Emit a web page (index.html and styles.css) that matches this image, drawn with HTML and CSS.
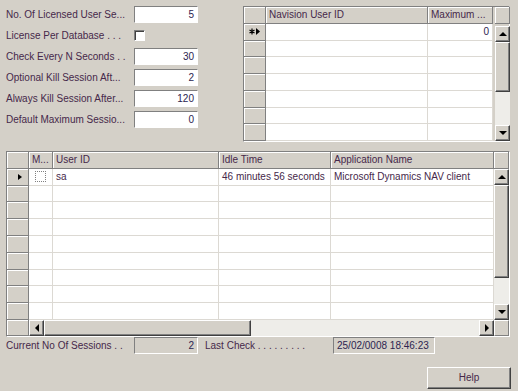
FILE: index.html
```html
<!DOCTYPE html>
<html>
<head>
    <title>Session Monitor</title>
    <link rel="stylesheet" href="styles.css">
</head>
<body>
<div class="window">

  <div class="top">
    <!-- setup fields -->
    <div class="form">
      <div class="row"><span class="lbl">No. Of Licensed User Se...</span><span class="field">5</span></div>
      <div class="row"><span class="lbl">License Per Database . . .</span><span class="check"></span></div>
      <div class="row"><span class="lbl">Check Every N Seconds . .</span><span class="field">30</span></div>
      <div class="row"><span class="lbl">Optional Kill Session Aft...</span><span class="field">2</span></div>
      <div class="row"><span class="lbl">Always Kill Session After...</span><span class="field">120</span></div>
      <div class="row"><span class="lbl">Default Maximum Sessio...</span><span class="field">0</span></div>
    </div>

    <!-- user limits grid -->
    <div class="grid grid-top">
      <div class="gap"></div>
      <div class="hc sbh"></div>
      <div class="vscroll">
        <div class="sbtn"><i class="up"></i></div>
        <div class="thumb" style="height:50px"></div>
        <div class="track"></div>
        <div class="sbtn"><i class="down"></i></div>
      </div>

      <div class="hc"></div><div class="hc">Navision User ID</div><div class="hc">Maximum ...</div>
      <div class="rh"><svg width="12" height="7" viewBox="0 0 12 7"><path d="M3 0.5v6M0.5 2l5 3M0.5 5l5-3" stroke="#000" stroke-width="1.2"/><path d="M7 0l4 3.5-4 3.5z" fill="#000"/></svg></div><div class="c"></div><div class="c num">0</div>
      <div class="rh"></div><div class="c"></div><div class="c"></div>
      <div class="rh"></div><div class="c"></div><div class="c"></div>
      <div class="rh"></div><div class="c"></div><div class="c"></div>
      <div class="rh"></div><div class="c"></div><div class="c"></div>
      <div class="rh"></div><div class="c"></div><div class="c"></div>
      <div class="rh"></div><div class="c"></div><div class="c"></div>
    </div>
  </div>

  <!-- sessions grid -->
  <div class="grid grid-bottom">
    <div class="hc sbh"></div>
    <div class="vscroll">
      <div class="sbtn"><i class="up"></i></div>
      <div class="thumb" style="height:93px"></div>
      <div class="track"></div>
      <div class="sbtn"><i class="down"></i></div>
    </div>
    <div class="rh hfoot"></div>
    <div class="hscroll">
      <div class="sbtn"><i class="left"></i></div>
      <div class="thumb" style="width:207px"></div>
      <div class="track"></div>
      <div class="sbtn"><i class="right"></i></div>
    </div>
    <div class="corner"></div>

    <div class="hc"></div><div class="hc">M...</div><div class="hc">User ID</div><div class="hc">Idle Time</div><div class="hc">Application Name</div>
    <div class="rh"><i class="cur"></i></div><div class="c"><span class="cb"></span></div><div class="c">sa</div><div class="c">46 minutes 56 seconds</div><div class="c">Microsoft Dynamics NAV client</div>
    <div class="rh"></div><div class="c"></div><div class="c"></div><div class="c"></div><div class="c"></div>
    <div class="rh"></div><div class="c"></div><div class="c"></div><div class="c"></div><div class="c"></div>
    <div class="rh"></div><div class="c"></div><div class="c"></div><div class="c"></div><div class="c"></div>
    <div class="rh"></div><div class="c"></div><div class="c"></div><div class="c"></div><div class="c"></div>
    <div class="rh"></div><div class="c"></div><div class="c"></div><div class="c"></div><div class="c"></div>
    <div class="rh"></div><div class="c"></div><div class="c"></div><div class="c"></div><div class="c"></div>
    <div class="rh"></div><div class="c"></div><div class="c"></div><div class="c"></div><div class="c"></div>
    <div class="rh"></div><div class="c"></div><div class="c"></div><div class="c"></div><div class="c"></div>
  </div>

  <div class="status">
    <span class="lbl">Current No Of Sessions . .</span><span class="field ro">2</span>
    <span class="lbl2">Last Check . . . . . . . . .</span><span class="field ro date">25/02/0008 18:46:23</span>
  </div>

  <div class="buttons">
    <button class="btn">Help</button>
  </div>
</div>
</body>
</html>
```

FILE: styles.css
```css
body {
  margin: 0;
  background: #d4d0c8;
  font-family: "Liberation Sans", Arial, sans-serif;
  font-size: 10px;
  color: #46284a;
}
.window {
  width: 518px;
  height: 391px;
  padding: 6px 0 0 6px;
  box-sizing: border-box;
  overflow: hidden;
}

/* top part */
.top {
  display: flex;
  height: 136px;
}
.form {
  width: 237px;
  display: flex;
  flex-direction: column;
  gap: 4px;
}
.row {
  display: flex;
  align-items: center;
  height: 17px;
}
.lbl {
  width: 128px;
  white-space: nowrap;
}
.field {
  width: 64px;
  height: 17px;
  box-sizing: border-box;
  background: #fff;
  border: 1px solid;
  border-color: #808080 #fff #fff #808080;
  text-align: right;
  padding-right: 3px;
  line-height: 15px;
  white-space: nowrap;
  color: #2c2450;
}
.check {
  width: 11px;
  height: 11px;
  box-sizing: border-box;
  background: #fff;
  border: 1px solid;
  border-color: #808080 #fff #fff #808080;
  box-shadow: inset 1px 1px #404040;
}

/* grids */
.grid {
  display: grid;
  border: 1px solid;
  border-color: #808080 #fff #fff #808080;
  background: #d4d0c8;
}
.grid-top {
  width: 267px;
  height: 136px;
  box-sizing: border-box;
  grid-template-columns: 22px 162px 65px 2px 15px;
  grid-template-rows: repeat(8, 16.75px);
}
.grid-bottom {
  margin-top: 9px;
  width: 504px;
  box-sizing: border-box;
  grid-template-columns: 22px 24px 166px 112px 163px 15px;
  grid-template-rows: repeat(10, 16.8px) 16px;
}
.hc, .rh {
  background: #d4d0c8;
  border-right: 1px solid #808080;
  border-bottom: 1px solid #808080;
  box-shadow: inset 1px 1px #fff;
  box-sizing: border-box;
  padding-left: 3px;
  line-height: 16px;
  white-space: nowrap;
  overflow: hidden;
}
.rh {
  padding: 0;
  display: flex;
  align-items: center;
  justify-content: center;
}
.c {
  background: #fff;
  border-right: 1px solid #dcd9d3;
  border-bottom: 1px solid #dcd9d3;
  box-sizing: border-box;
  padding: 0 3px;
  line-height: 16px;
  white-space: nowrap;
  overflow: hidden;
}
.num {
  text-align: right;
  color: #2c2450;
}
.cb {
  display: block;
  width: 11px;
  height: 11px;
  box-sizing: border-box;
  margin: 2px 0 0 3px;
  border: 1px dotted #808080;
  background: #fff;
}
.cur {
  width: 0;
  height: 0;
  margin-left: 4px;
  border-left: 4px solid #000;
  border-top: 3.5px solid transparent;
  border-bottom: 3.5px solid transparent;
}

.grid-top .gap {
  grid-column: 4;
  grid-row: 1 / -1;
}
.grid-top .sbh {
  grid-column: 5;
  grid-row: 1;
}
.grid-top .vscroll {
  grid-column: 5;
  grid-row: 2 / -1;
  padding-top: 2px;
}
.grid-bottom .sbh {
  grid-column: 6;
  grid-row: 1;
}
.grid-bottom .vscroll {
  grid-column: 6;
  grid-row: 2 / 11;
}
.hfoot {
  grid-column: 1;
  grid-row: 11;
}
.hscroll {
  grid-column: 2 / 6;
  grid-row: 11;
  display: flex;
}
.corner {
  grid-column: 6;
  grid-row: 11;
  background: #d4d0c8;
  border: 1px solid;
  border-color: #fff #808080 #808080 #fff;
  box-sizing: border-box;
}

/* scroll bars */
.vscroll {
  display: flex;
  flex-direction: column;
}
.sbtn, .thumb {
  background: #d4d0c8;
  border: 1px solid;
  border-color: #fff #404040 #404040 #fff;
  box-shadow: inset -1px -1px #808080;
  box-sizing: border-box;
  flex: none;
}
.vscroll .sbtn {
  height: 16px;
  display: flex;
  align-items: center;
  justify-content: center;
}
.hscroll .sbtn {
  width: 15px;
  display: flex;
  align-items: center;
  justify-content: center;
}
.track {
  flex: 1;
  background: #eeede9;
}
.up, .down, .left, .right {
  width: 0;
  height: 0;
}
.up {
  border-bottom: 4px solid #000;
  border-left: 4px solid transparent;
  border-right: 4px solid transparent;
}
.down {
  border-top: 4px solid #000;
  border-left: 4px solid transparent;
  border-right: 4px solid transparent;
}
.left {
  border-right: 4px solid #000;
  border-top: 4px solid transparent;
  border-bottom: 4px solid transparent;
}
.right {
  border-left: 4px solid #000;
  border-top: 4px solid transparent;
  border-bottom: 4px solid transparent;
}

/* footer */
.status {
  display: flex;
  align-items: center;
  height: 17px;
}
.field.ro {
  background: #d4d0c8;
}
.lbl2 {
  margin-left: 7px;
  width: 128px;
  white-space: nowrap;
}
.field.date {
  width: 102px;
  text-align: left;
  padding-left: 3px;
}
.buttons {
  display: flex;
  justify-content: flex-end;
  padding-right: 7px;
  margin-top: 13px;
}
.btn {
  width: 84px;
  height: 22px;
  background: #d4d0c8;
  border: 1px solid;
  border-color: #fff #404040 #404040 #fff;
  box-shadow: inset -1px -1px #808080;
  font-family: "Liberation Sans", Arial, sans-serif;
  font-size: 10px;
  color: #46284a;
  padding: 0;
}
```
